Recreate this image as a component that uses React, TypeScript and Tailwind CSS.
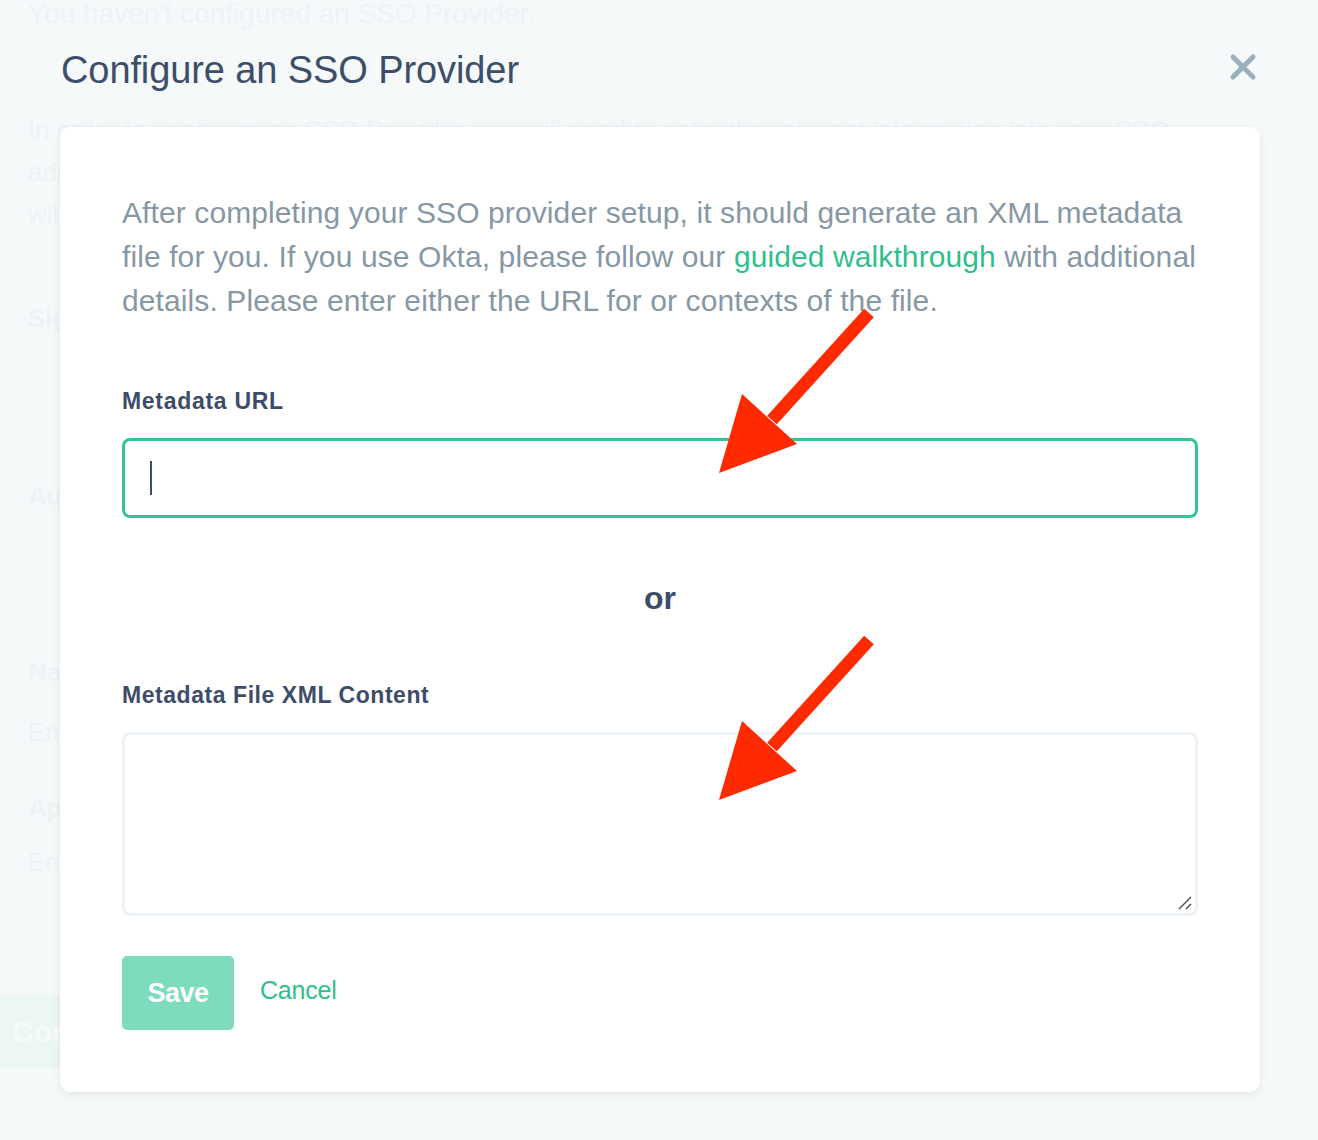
import React from "react";

function Arrow({ dy }: { dy: number }) {
  return (
    <g transform={`translate(0 ${dy})`}>
      <line x1="869" y1="313" x2="772" y2="420" stroke="#ff2a00" strokeWidth="13" />
      <polygon points="742,394 797,444 719,473" fill="#ff2a00" />
    </g>
  );
}

export default function App() {
  const font = { fontFamily: '"Liberation Sans", Arial, sans-serif' };
  return (
    <div className="relative w-[1318px] h-[1140px] overflow-hidden bg-[#f5f9fa]" style={font}>
      {/* background page (dimmed) */}
      <div className="absolute inset-0 pl-[28px] text-[#eef3f5]">
        <div className="text-[28px] leading-[30px] -mt-[1px] whitespace-nowrap">You haven't configured an SSO Provider.</div>
        <div className="mt-[80px] text-[26px] leading-[42px] w-[1300px] whitespace-nowrap">
          <div>In order to configure an SSO Provider, you will need to enter the relevant information into your SSO</div>
          <div>admin panel and then paste the metadata from it into the form below. If you have any issues, you</div>
          <div>will need to</div>
        </div>
        <div className="mt-[64px] text-[26px] font-bold">Sign-on URL</div>
        <div className="mt-[139px] text-[26px] font-bold">Audience URI</div>
        <div className="mt-[137px] text-[26px] font-bold">Name ID Format</div>
        <div className="mt-[21px] text-[26px]">EmailAddress</div>
        <div className="mt-[37px] text-[26px] font-bold">Application Username</div>
        <div className="mt-[15px] text-[26px]">Email</div>
        <div className="mt-[113px] -ml-[28px] w-[200px] h-[73px] bg-[#ecf7f3] flex items-center pl-[12px] text-[30px] font-bold text-[#f6fbf9]">Continue</div>
      </div>

      {/* modal */}
      <div className="relative pl-[60px] pr-[58px] pt-[44px]">
        <div className="flex items-start justify-between">
          <h1 className="text-[38px] leading-[52px] text-[#3e4e69] tracking-[-0.1px] pl-[1px]">Configure an SSO Provider</h1>
          <svg width="30" height="30" viewBox="0 0 30 30" className="mt-[8px] mr-[2px]">
            <path d="M5 5 L25 25 M25 5 L5 25" stroke="#9bb0bf" strokeWidth="5" strokeLinecap="round" />
          </svg>
        </div>

        <div className="mt-[31px] bg-white rounded-[10px] shadow-[0_2px_8px_rgba(0,0,0,0.08)] pt-[64px] pb-[62px] px-[62px]">
          <p className="text-[30px] leading-[44px] text-[#8797a4] tracking-[0.1px] whitespace-nowrap">
            After completing your SSO provider setup, it should generate an XML metadata
            <br />
            file for you. If you use Okta, please follow our <span className="text-[#2ebf8c]">guided walkthrough</span> with additional
            <br />
            details. Please enter either the URL for or contexts of the file.
          </p>

          <div className="mt-[64px] text-[23px] leading-[28px] font-bold text-[#3d4d69] tracking-[0.7px]">Metadata URL</div>
          <div className="mt-[23px] h-[80px] border-[3px] border-[#34c49a] rounded-[8px] flex items-center pl-[25px]">
            <div className="w-[2px] h-[34px] bg-[#3d4d69]" />
          </div>

          <div className="mt-[60px] text-center text-[32px] leading-[40px] font-bold text-[#3d4d69]">or</div>

          <div className="mt-[63px] text-[23px] leading-[28px] font-bold text-[#3d4d69] tracking-[0.55px]">Metadata File XML Content</div>
          <div className="relative mt-[23px] h-[184px] border-[3px] border-[#eef3f7] rounded-[8px]">
            <svg width="16" height="16" viewBox="0 0 16 16" className="absolute right-[2px] bottom-[2px]">
              <path d="M2 14 L14 2 M9 14 L14 9" stroke="#555" strokeWidth="1.5" />
            </svg>
          </div>

          <div className="mt-[40px] flex items-start">
            <button className="w-[112px] h-[74px] rounded-[5px] bg-[#7ddbbe] text-white text-[27px] font-bold tracking-[-0.5px]">Save</button>
            <span className="ml-[26px] mt-[16px] text-[25px] text-[#2ebf8c] tracking-[-0.2px]">Cancel</span>
          </div>
        </div>
      </div>

      <svg className="absolute inset-0 pointer-events-none" width="1318" height="1140">
        <Arrow dy={0} />
        <Arrow dy={327} />
      </svg>
    </div>
  );
}
